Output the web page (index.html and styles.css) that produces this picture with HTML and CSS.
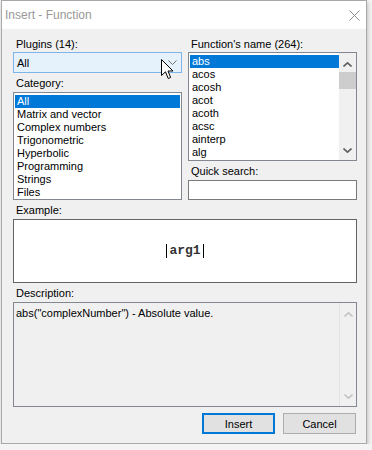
FILE: index.html
```html
<!DOCTYPE html>
<html lang="en">
<head>
    <meta charset="UTF-8">
    <title>Insert - Function</title>
    <link rel="stylesheet" href="styles.css">
</head>
<body>
    <div class="window">
        <div class="titlebar">
            <span class="title">Insert - Function</span>
            <svg class="close" width="11" height="11" viewBox="0 0 11 11">
                <path d="M0.5 0.5 L10.5 10.5 M10.5 0.5 L0.5 10.5" stroke="#8c8c8c" stroke-width="1" fill="none"/>
            </svg>
        </div>
        <div class="content">
            <div class="columns">
                <div class="col">
                    <div class="label">Plugins (14):</div>
                    <div class="combo">
                        <span>All</span>
                        <svg width="9" height="5" viewBox="0 0 9 5"><path d="M0.5 0.5 L4.5 4.5 L8.5 0.5" stroke="#707070" fill="none"/></svg>
                    </div>
                    <div class="label gap">Category:</div>
                    <div class="listbox cat-list">
                        <div class="item selected">All</div>
                        <div class="item">Matrix and vector</div>
                        <div class="item">Complex numbers</div>
                        <div class="item">Trigonometric</div>
                        <div class="item">Hyperbolic</div>
                        <div class="item">Programming</div>
                        <div class="item">Strings</div>
                        <div class="item">Files</div>
                    </div>
                </div>
                <div class="col">
                    <div class="label">Function's name (264):</div>
                    <div class="listbox fn-list">
                        <div class="fn-items">
                            <div class="item selected">abs</div>
                            <div class="item">acos</div>
                            <div class="item">acosh</div>
                            <div class="item">acot</div>
                            <div class="item">acoth</div>
                            <div class="item">acsc</div>
                            <div class="item">ainterp</div>
                            <div class="item">alg</div>
                        </div>
                        <div class="scrollbar">
                            <div class="sb-btn sb-up">
                                <svg width="9" height="5" viewBox="0 0 9 5"><path d="M0.5 4.5 L4.5 0.8 L8.5 4.5" stroke="#606060" stroke-width="1.6" fill="none"/></svg>
                            </div>
                            <div class="thumb"></div>
                            <div class="sb-fill"></div>
                            <div class="sb-btn">
                                <svg width="9" height="5" viewBox="0 0 9 5"><path d="M0.5 0.5 L4.5 4.2 L8.5 0.5" stroke="#606060" stroke-width="1.6" fill="none"/></svg>
                            </div>
                        </div>
                    </div>
                    <div class="label gap">Quick search:</div>
                    <div class="input"></div>
                </div>
            </div>

            <div class="label gap">Example:</div>
            <div class="example">
                <span class="formula">arg1</span>
            </div>

            <div class="label gap">Description:</div>
            <div class="description">
                <div class="desc-text">abs("complexNumber") - Absolute value.</div>
                <div class="scrollbar disabled">
                    <div class="sb-btn sb-up">
                        <svg width="9" height="5" viewBox="0 0 9 5"><path d="M0.5 4.5 L4.5 0.8 L8.5 4.5" stroke="#c4c4c4" stroke-width="1.6" fill="none"/></svg>
                    </div>
                    <div class="sb-fill"></div>
                    <div class="sb-btn">
                        <svg width="9" height="5" viewBox="0 0 9 5"><path d="M0.5 0.5 L4.5 4.2 L8.5 0.5" stroke="#c4c4c4" stroke-width="1.6" fill="none"/></svg>
                    </div>
                </div>
            </div>

            <div class="buttons">
                <button class="btn default">Insert</button>
                <button class="btn">Cancel</button>
            </div>
        </div>

        <svg class="cursor" width="13" height="21" viewBox="0 0 13 21">
            <path d="M0.5 0.5 L0.5 16.5 L4.5 12.8 L7.2 19.5 L9.6 18.5 L7 12 L12 12 Z" fill="#fff" stroke="#000" stroke-width="1"/>
        </svg>
    </div>
</body>
</html>
```

FILE: styles.css
```css
* {
    box-sizing: border-box;
}
body {
    margin: 0;
    background-color: #f4f4f4;
    font-family: "Liberation Sans", Arial, sans-serif;
    font-size: 11px;
    color: #000;
}
.window {
    position: relative;
    width: 366px;
    height: 444px;
    margin-left: 1px;
    border: 1px solid #a9a9a9;
    background-color: #f0f0f0;
    box-shadow: 1px 2px 4px rgba(0, 0, 0, 0.22);
}
.titlebar {
    display: flex;
    align-items: center;
    height: 28px;
    padding: 0 6px 0 3px;
    background-color: #fff;
}
.title {
    font-size: 12px;
    color: #999;
}
.close {
    margin-left: auto;
}
.content {
    padding: 9px 9px 9px 11px;
}
.columns {
    display: grid;
    grid-template-columns: 169px 169px;
    column-gap: 6px;
}
.label {
    height: 13px;
    line-height: 13px;
    padding-left: 3px;
    margin-bottom: 1px;
    white-space: nowrap;
}
.label.gap {
    margin-top: 4px;
    margin-bottom: 2px;
}
.combo {
    display: flex;
    align-items: center;
    justify-content: space-between;
    height: 21px;
    padding: 0 4px 0 3px;
    border: 1px solid #7eb4ea;
    background-color: #e5f1fb;
}
.listbox {
    border: 1px solid #828790;
    background-color: #fff;
    overflow: hidden;
}
.cat-list {
    height: 108px;
    padding: 2px 1px 0 1px;
}
.fn-list {
    display: flex;
    height: 109px;
}
.fn-items {
    flex: 1;
    padding: 2px 0 0 1px;
}
.item {
    height: 13px;
    line-height: 13px;
    padding-left: 2px;
    white-space: nowrap;
}
.item.selected {
    background-color: #0078d7;
    color: #fff;
}
.scrollbar {
    display: flex;
    flex-direction: column;
    width: 17px;
    background-color: #f0f0f0;
}
.sb-btn {
    display: flex;
    align-items: center;
    justify-content: center;
    height: 19px;
}
.sb-up {
    padding-top: 3px;
}
.thumb {
    height: 17px;
    background-color: #cdcdcd;
}
.sb-fill {
    flex: 1;
}
.input {
    height: 20px;
    border: 1px solid #7a7a7a;
    background-color: #fff;
}
.example {
    display: flex;
    align-items: center;
    justify-content: center;
    height: 64px;
    border: 1px solid #646464;
    background-color: #fff;
}
.formula {
    padding: 0 2px;
    border-left: 1px solid #000;
    border-right: 1px solid #000;
    font-family: "Liberation Mono", "Courier New", monospace;
    font-size: 13px;
    font-weight: bold;
    line-height: 14px;
    color: #333;
}
.description {
    display: flex;
    height: 105px;
    border: 1px solid #828790;
    background-color: #f0f0f0;
}
.desc-text {
    flex: 1;
    padding: 4px 0 0 2px;
    line-height: 13px;
}
.scrollbar.disabled {
    border-left: 1px solid #e3e3e3;
}
.buttons {
    display: flex;
    justify-content: flex-end;
    gap: 8px;
    margin-top: 6px;
    padding-right: 1px;
}
.btn {
    width: 73px;
    height: 21px;
    padding: 0;
    border: 1px solid #adadad;
    background-color: #e1e1e1;
    font-family: "Liberation Sans", Arial, sans-serif;
    font-size: 11px;
    color: #000;
}
.btn.default {
    border: 2px solid #0078d7;
}
.cursor {
    position: absolute;
    left: 159px;
    top: 58px;
}
```
